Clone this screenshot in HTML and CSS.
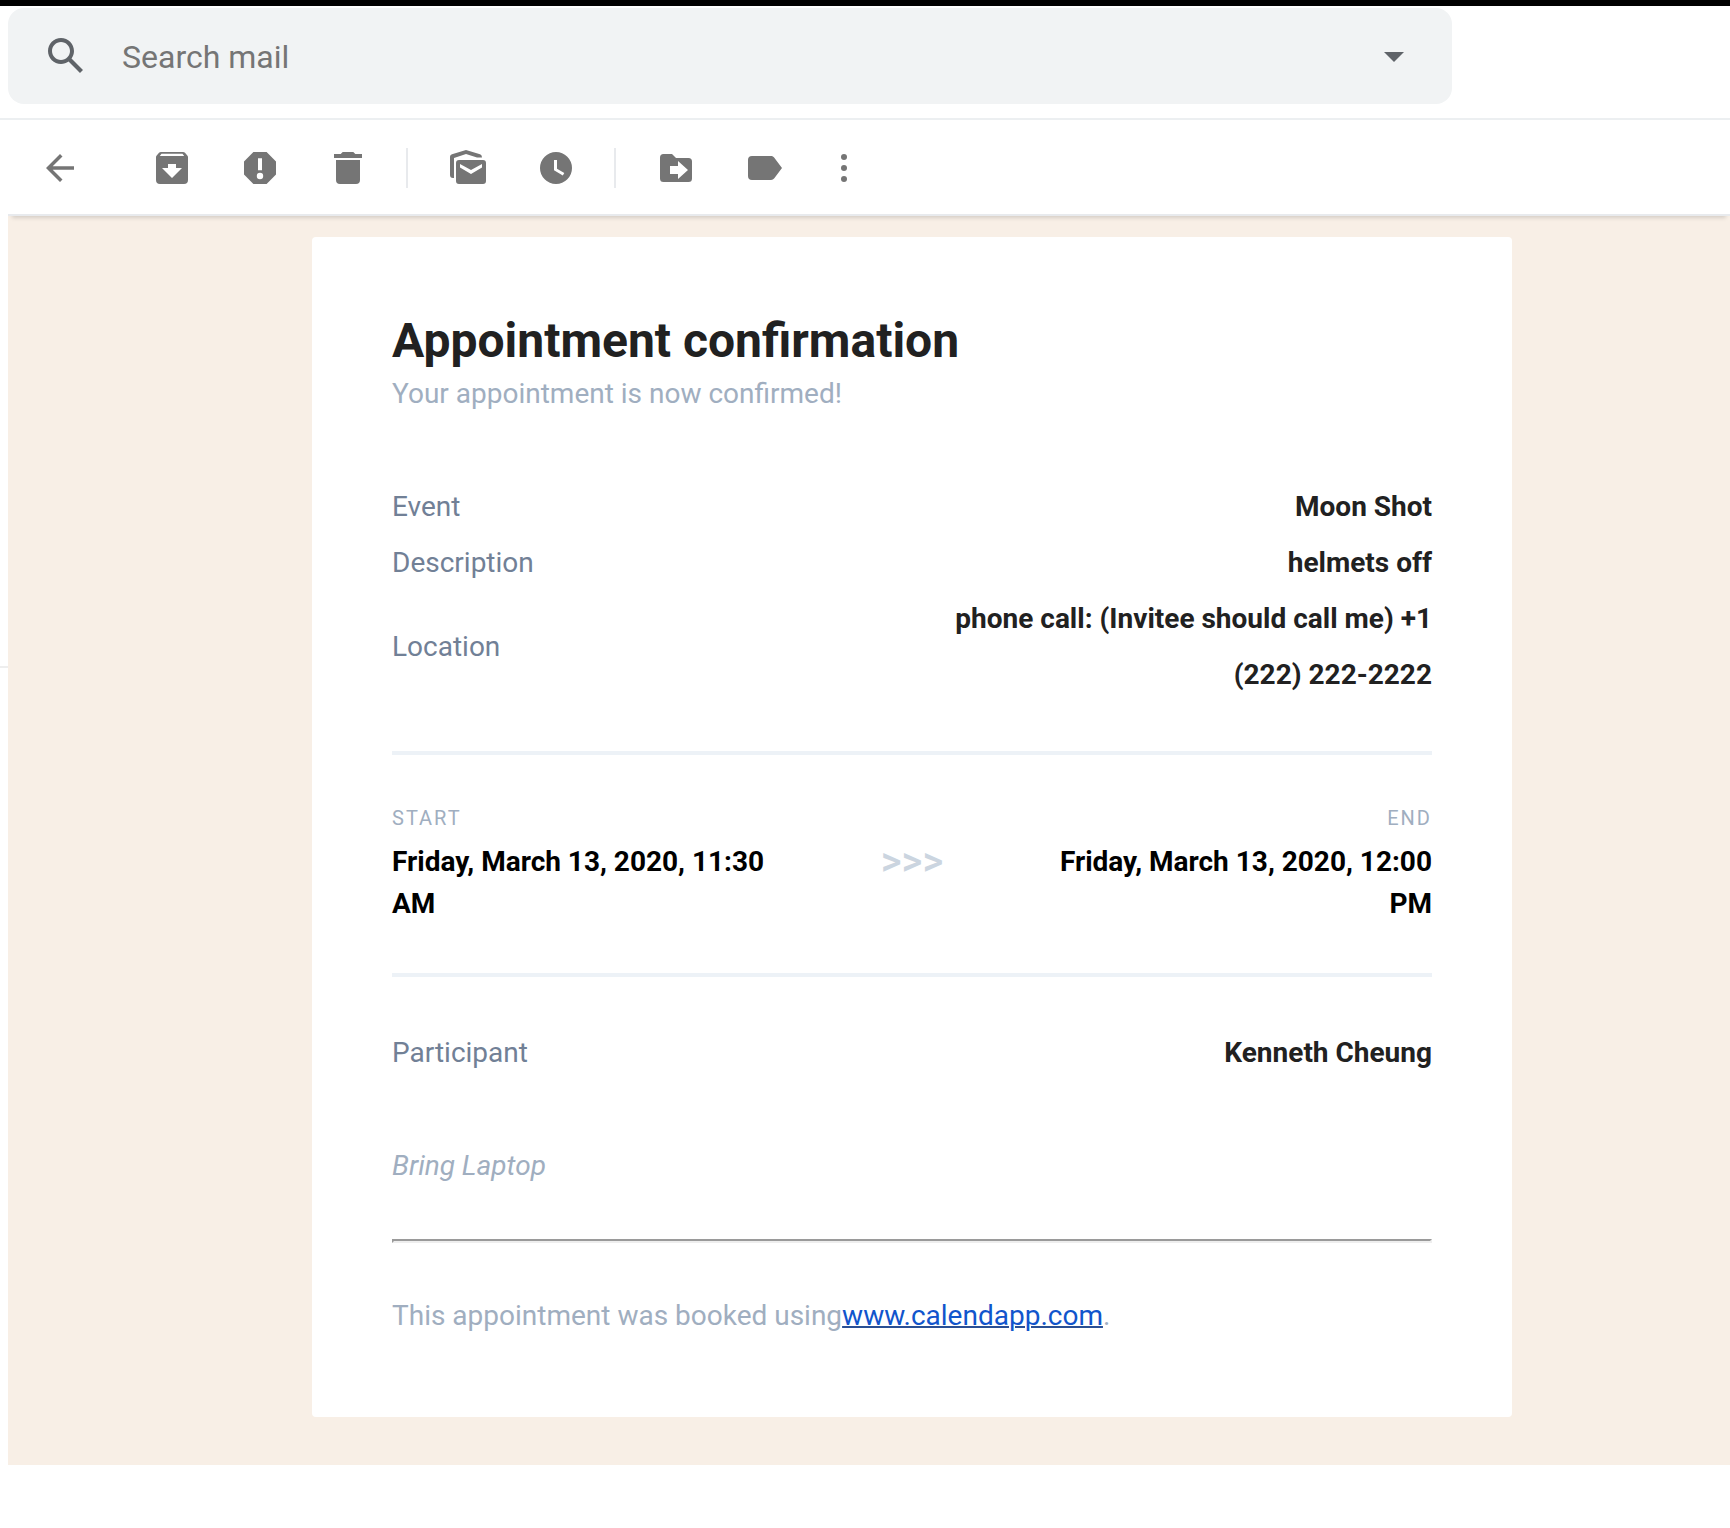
FILE: index.html
```html
<!DOCTYPE html>
<html lang="en">
<head>
<meta charset="utf-8">
<meta name="viewport" content="width=device-width, initial-scale=1">
<title>Appointment confirmation</title>
<link rel="stylesheet" href="styles.css">
</head>
<body>
<header class="topbar">
  <form class="search" role="search">
    <button class="search-button" type="button" aria-label="Search">
      <svg width="48" height="48" viewBox="0 0 24 24"><path d="M20.49 19l-5.73-5.73C15.53 12.2 16 10.91 16 9.5 16 5.91 13.09 3 9.5 3S3 5.91 3 9.5 5.91 16 9.5 16c1.41 0 2.7-.47 3.77-1.24L19 20.49 20.49 19zM5 9.5C5 7.01 7.01 5 9.5 5S14 7.01 14 9.5 11.99 14 9.5 14 5 11.99 5 9.5z"/></svg>
    </button>
    <input class="search-input" type="text" placeholder="Search mail" aria-label="Search mail">
    <button class="search-button" type="button" aria-label="Search options">
      <svg width="48" height="48" viewBox="0 0 24 24"><path d="M7 10l5 5 5-5z"/></svg>
    </button>
  </form>
</header>

<div class="toolbar" role="toolbar" aria-label="Message actions">
  <button class="tool tool-back" type="button" aria-label="Back">
    <svg width="40" height="40" viewBox="0 0 40 40"><path d="M34 18.2H12.7l9.8-9.8L20 6 6 20l14 14 2.5-2.4-9.8-9.8H34z"/></svg>
  </button>
  <button class="tool" type="button" aria-label="Archive">
    <svg width="40" height="40" viewBox="0 0 40 40"><path fill-rule="evenodd" d="M9 4h22c.8 0 1.500.3 2 .8l2.300 2.600c.5.5.7 1.100.7 1.800V32a4 4 0 0 1-4 4H8a4 4 0 0 1-4-4V9.200c0-.7.2-1.300.7-1.800L7 4.800c.5-.5 1.200-.8 2-.8zM9.500 5.800L7.800 8h24.400l-1.700-2.200zM16 16v4h-6l10 10 10-10h-6v-4z"/></svg>
  </button>
  <button class="tool" type="button" aria-label="Report spam">
    <svg width="40" height="40" viewBox="0 0 40 40"><path fill-rule="evenodd" d="M13.400 4h13.200L36 13.400v13.200L26.600 36H13.400L4 26.600V13.400zM18 10.300v12h4v-12zM20 24.800a3.200 3.200 0 1 0 0 6.400 3.200 3.200 0 0 0 0-6.400z"/></svg>
  </button>
  <button class="tool" type="button" aria-label="Delete">
    <svg width="40" height="40" viewBox="0 0 40 40"><path d="M8 12h24v20a4 4 0 0 1-4 4H12a4 4 0 0 1-4-4zM34 6v4H6V6h6.700l2-2h10.600l2 2z"/></svg>
  </button>
  <span class="separator"></span>
  <button class="tool" type="button" aria-label="Mark as unread">
    <svg width="40" height="40" viewBox="0 0 40 40"><path d="M6 30H5a3 3 0 0 1-3-3V9c0-1.300.7-2.300 2-2.800L18 2l14 4.200c1.200.4 1.800 1.500 2 3.300h-5L18 6 6 10z"/><path fill-rule="evenodd" d="M11 12h24a3 3 0 0 1 3 3v18a3 3 0 0 1-3 3H11a3 3 0 0 1-3-3V15a3 3 0 0 1 3-3zM12 16v3.500L23 26l11-6.500V16l-11 6z"/></svg>
  </button>
  <button class="tool" type="button" aria-label="Snooze">
    <svg width="40" height="40" viewBox="0 0 40 40"><path fill-rule="evenodd" d="M20 4a16 16 0 1 0 0 32 16 16 0 0 0 0-32zM18 12h3v8.700l7.300 4.200-1.500 2.500L18 22.300z"/></svg>
  </button>
  <span class="separator"></span>
  <button class="tool" type="button" aria-label="Move to">
    <svg width="40" height="40" viewBox="0 0 40 40"><path fill-rule="evenodd" d="M7.500 6H16l4 4h12.500a3.500 3.500 0 0 1 3.500 3.500v17a3.500 3.500 0 0 1-3.500 3.500h-25A3.500 3.500 0 0 1 4 30.500v-21A3.500 3.500 0 0 1 7.500 6zM14 18v8h8v5l10-9-10-9v5z"/></svg>
  </button>
  <button class="tool" type="button" aria-label="Labels">
    <svg width="40" height="40" viewBox="0 0 40 40"><path d="M8 8h19c1.300 0 2.500.6 3.300 1.700L38 20l-7.700 10.300A4 4 0 0 1 27 32H8a4 4 0 0 1-4-4V12a4 4 0 0 1 4-4z"/></svg>
  </button>
  <button class="tool tool-more" type="button" aria-label="More">
    <svg width="40" height="40" viewBox="0 0 40 40"><circle cx="20" cy="9" r="3"/><circle cx="20" cy="20" r="3"/><circle cx="20" cy="31" r="3"/></svg>
  </button>
</div>

<div class="content">
  <aside class="rail"><div class="rail-line"></div></aside>
  <main class="message">
    <article class="card">
      <h1 class="title">Appointment confirmation</h1>
      <p class="subtitle">Your appointment is now confirmed!</p>

      <table class="details">
        <tr><th scope="row">Event</th><td>Moon Shot</td></tr>
        <tr><th scope="row">Description</th><td>helmets off</td></tr>
        <tr><th scope="row">Location</th><td>phone call: (Invitee should call me) +1 (222) 222-2222</td></tr>
      </table>

      <section class="times">
        <div class="time">
          <div class="time-label">START</div>
          <div class="time-value">Friday, March 13, 2020, 11:30 AM</div>
        </div>
        <div class="arrows">&gt;&gt;&gt;</div>
        <div class="time time-end">
          <div class="time-label">END</div>
          <div class="time-value">Friday, March 13, 2020, 12:00 PM</div>
        </div>
      </section>

      <table class="details">
        <tr><th scope="row">Participant</th><td>Kenneth Cheung</td></tr>
      </table>

      <p class="note">Bring Laptop</p>
      <hr class="rule">
      <p class="footer">This appointment was booked using<a class="link" href="#">www.calendapp.com</a>.</p>
    </article>
  </main>
</div>
</body>
</html>
```
FILE: styles.css
```css
* {
  box-sizing: border-box;
}

body {
  margin: 0;
  background: #fff;
  color: #212121;
  font-family: Roboto, "Liberation Sans", sans-serif;
  font-size: 28px;
  line-height: 42px;
}

button {
  display: flex;
  align-items: center;
  justify-content: center;
  padding: 0;
  border: 0;
  background: none;
}

/* Search */
.topbar {
  padding: 2px 278px 14px 8px;
  border-top: 6px solid #000;
  border-bottom: 2px solid #eceff1;
}

.search {
  display: flex;
  align-items: center;
  height: 96px;
  padding: 0 34px;
  border-radius: 16px;
  background: #f1f3f4;
}

.search-button {
  fill: #5f6368;
}

.search-input {
  flex: 1;
  min-width: 0;
  padding: 2px 32px 0;
  border: 0;
  background: none;
  font: 32px/40px Roboto, "Liberation Sans", sans-serif;
}

.search-input::placeholder {
  color: #757575;
  opacity: 1;
}

/* Message actions */
.toolbar {
  position: relative;
  display: flex;
  align-items: center;
  height: 98px;
  margin: -2px 0 0 8px;
  padding: 4px 0 0 8px;
  border-bottom: 2px solid #e8eaed;
  box-shadow: 0 6px 4px -4px rgba(0, 0, 0, 0.14);
}

.tool {
  width: 88px;
  height: 80px;
  fill: #757575;
}

.tool-back {
  margin-right: 24px;
}

.tool-more {
  width: 72px;
}

.separator {
  width: 2px;
  height: 40px;
  margin: 0 16px 0 14px;
  background: #e8eaed;
}

/* Message */
.content {
  display: flex;
}

.rail {
  width: 8px;
  padding-top: 450px;
}

.rail-line {
  border-top: 2px solid #eee;
}

.message {
  flex: 1;
  display: grid;
  grid-template-columns: 304fr minmax(0, 1200px) 218fr;
  padding: 21px 0 48px;
  background: #f8efe6;
}

.card {
  grid-column: 2;
  padding: 80px;
  border-radius: 4px;
  background: #fff;
}

.title {
  margin: 0 0 8px;
  font-size: 48px;
  line-height: 48px;
}

.subtitle {
  margin: 0 0 64px;
  color: #a0aec0;
}

.details {
  width: 100%;
  border-collapse: collapse;
  table-layout: fixed;
  line-height: 56px;
}

.details th,
.details td {
  padding: 0;
}

.details th {
  color: #718096;
  font-weight: 400;
  text-align: left;
}

.details td {
  font-weight: 700;
  text-align: right;
}

.times {
  display: grid;
  grid-template-columns: 2fr 1fr 2fr;
  align-items: center;
  margin: 48px 0;
  padding: 48px 0;
  border: solid #edf2f7;
  border-width: 4px 0;
}

.time-end {
  text-align: right;
}

.time-label {
  margin-bottom: 8px;
  color: #a0aec0;
  font-size: 20px;
  line-height: 30px;
  letter-spacing: 2px;
}

.time-value {
  color: #000;
  font-weight: 700;
}

.arrows {
  padding-bottom: 4px;
  color: #cbd5e0;
  font-size: 40px;
  font-weight: 500;
  text-align: center;
}

.note {
  margin: 64px 0 52px;
  color: #a0aec0;
  font-style: italic;
}

.rule {
  margin: 0 0 52px;
  border: 2px inset #eee;
}

.footer {
  margin: 0;
  color: #a0aec0;
}

.link {
  color: #15c;
  text-decoration: underline 2px #2a4f94;
}
```
